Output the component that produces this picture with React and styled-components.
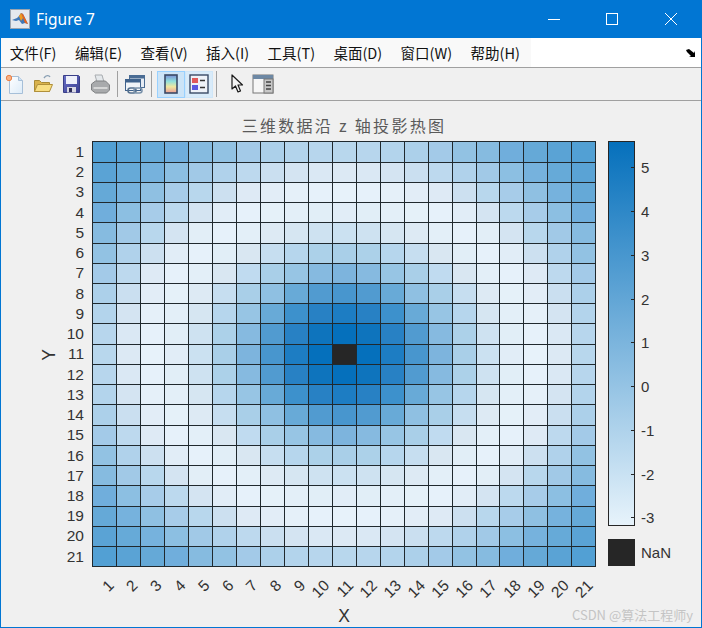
import React from 'react';
import styled, { createGlobalStyle } from 'styled-components';

const GlobalStyle = createGlobalStyle`
  html, body {
    margin: 0;
    padding: 0;
    background: #f0f0f0;
  }
`;

const MENUS = ['文件(F)', '编辑(E)', '查看(V)', '插入(I)', '工具(T)', '桌面(D)', '窗口(W)', '帮助(H)'];

// cell colour as a function of distance (in cells) from the centre of the grid
const RAMP = [
  [0, '#0570bc'], [1, '#0570bc'], [1.41, '#0e74bd'], [2, '#1d7dc3'], [2.24, '#2881c4'],
  [2.83, '#3d91cc'], [3, '#4896ce'], [3.16, '#519bd0'], [3.6, '#68aad7'], [4, '#7db4dd'],
  [4.24, '#8fc0e2'], [5, '#a9cfe8'], [5.66, '#c0dbf0'], [6.4, '#d9e7f2'], [7.2, '#e3eff8'],
  [8, '#e7f2fa'], [8.94, '#deeaf5'], [9.43, '#cce0f0'], [10, '#b8d7ed'], [10.77, '#a3cae8'],
  [11.18, '#92c2e3'], [11.66, '#86bbe0'], [12.2, '#70aedc'], [12.8, '#65a9d7'],
  [13.45, '#5aa3d5'], [14.15, '#52a0d4'],
];

const toRgb = (hex) => [1, 3, 5].map((i) => parseInt(hex.slice(i, i + 2), 16));

const colorAt = (r) => {
  for (let i = 1; i < RAMP.length; i++) {
    if (r <= RAMP[i][0]) {
      const [r0, c0] = RAMP[i - 1];
      const [r1, c1] = RAMP[i];
      const t = (r - r0) / (r1 - r0);
      const a = toRgb(c0);
      const b = toRgb(c1);
      return `rgb(${a.map((v, k) => Math.round(v + (b[k] - v) * t)).join(',')})`;
    }
  }
  return RAMP[RAMP.length - 1][1];
};

const N = 21;
const LEFT = 92.3;
const TOP = 141.3;
const CELL_W = 23.95;
const CELL_H = 20.24;
const xAt = (i) => Math.round(LEFT + i * CELL_W);
const yAt = (i) => Math.round(TOP + i * CELL_H);
const indexes = Array.from({ length: N }, (_, i) => i);
const TICKS = [5, 4, 3, 2, 1, 0, -1, -2, -3];

const Window = styled.div`
  width: 702px;
  height: 628px;
  box-sizing: border-box;
  border: 1px solid #0176d3;
  border-top: 0;
  display: flex;
  flex-direction: column;
  background: #f0f0f0;
  overflow: hidden;
`;

const TitleBar = styled.div`
  height: 38px;
  flex: none;
  background: #0176d3;
  display: flex;
  align-items: center;
  padding: 0 1px 0 9px;
  color: #fff;
`;

const TitleText = styled.span`
  font-family: 'Noto Sans', sans-serif;
  font-size: 15.5px;
  margin-left: 6px;
  flex: 1;
`;

const WindowButton = styled.div`
  width: 58.5px;
  height: 38px;
  display: flex;
  align-items: center;
  justify-content: center;
`;

const MenuBar = styled.div`
  height: 29px;
  flex: none;
  background: #fff;
  border-bottom: 1px solid #a0a0a0;
  display: flex;
  align-items: center;
  justify-content: space-between;
`;

const MenuList = styled.div`
  display: flex;
  align-items: center;
  height: 100%;
  background: #f9f9f9;
  width: 530px;
  padding-left: 0;
  margin-left: -0.5px;
`;

const MenuItem = styled.span`
  font-family: 'Noto Sans CJK SC', 'Liberation Sans', sans-serif;
  font-size: 14.5px;
  line-height: 27px;
  height: 28px;
  color: #111;
  padding: 0 9.2px;
  white-space: nowrap;
`;

const Overflow = styled.svg`
  margin-right: 4px;
`;

const ToolBar = styled.div`
  height: 32px;
  flex: none;
  border-bottom: 1px solid #a0a0a0;
  display: flex;
  align-items: center;
`;

const ToolButton = styled.div`
  width: ${(p) => p.$w || 28.5}px;
  height: 27px;
  box-sizing: border-box;
  display: flex;
  align-items: center;
  justify-content: center;
  background: ${(p) => (p.$on ? '#cce4f7' : p.$soft ? '#d9ebf9' : 'transparent')};
  border: 1px solid ${(p) => (p.$on ? '#99d1ff' : p.$soft ? '#cfe6f8' : 'transparent')};
`;

const Separator = styled.div`
  width: 1px;
  height: 26px;
  background: #a0a0a0;
  margin: 0 ${(p) => p.$right || 4}px 0 ${(p) => p.$left || 4}px;
`;

const Canvas = styled.div`
  flex: 1;
  min-height: 0;
  position: relative;
`;

const Chart = styled.svg`
  display: block;
`;

const Tick = styled.text`
  font-family: 'Liberation Sans', Arial, sans-serif;
  font-size: ${(p) => p.$size || 15.5}px;
  fill: #333;
`;

const PlotTitle = styled.text`
  font-family: 'Noto Sans CJK SC', 'Liberation Serif', serif;
  font-size: 16px;
  letter-spacing: 2.3px;
  fill: #5a5a5a;
`;

const Watermark = styled.span`
  position: absolute;
  right: 8px;
  bottom: 3px;
  font-family: 'Noto Sans CJK SC', 'Liberation Sans', sans-serif;
  font-size: 13px;
  color: #bdbdbd;
  opacity: 0.85;
`;

const MatlabLogo = () => (
  <svg width="20" height="20" viewBox="0 0 20 20">
    <rect x="0.5" y="0.5" width="19" height="19" fill="#e4e8ee" stroke="#9aa4b0" />
    <path d="M2 11l5-2 2-2 2-3 2 1 5 10-3-1-3 1-3-4-3 1z" fill="#3f78b8" />
    <path d="M11 4l2 1 5 10-3-1-2-5z" fill="#e8641c" />
    <path d="M9 7l2-3 2 5-2 3z" fill="#f29a1e" />
  </svg>
);

const NewIcon = () => (
  <svg width="22" height="22" viewBox="0 0 22 22">
    <defs>
      <linearGradient id="page-fill" x1="0" y1="0" x2="1" y2="1">
        <stop offset="0" stopColor="#ffffff" />
        <stop offset="1" stopColor="#dcebf8" />
      </linearGradient>
    </defs>
    <path d="M5.500 3.500h9l4 4v13h-13z" fill="url(#page-fill)" stroke="#a6bfd8" />
    <path d="M14.500 3.500v4h4" fill="#cfe2f3" stroke="#a6bfd8" />
    <circle cx="5" cy="5" r="2.700" fill="#f6b184" stroke="#ea7f46" />
  </svg>
);

const OpenIcon = () => (
  <svg width="22" height="22" viewBox="0 0 22 22">
    <path d="M11 5c2-3 5-3 6-1" fill="none" stroke="#8aa0b4" strokeWidth="1.4" />
    <path d="M1.500 7.500h5l2 2h8v9h-15z" fill="#d9b24c" stroke="#a98a35" />
    <path d="M1.500 18.500l3-7h15l-3 7z" fill="#f8de82" stroke="#b0903a" />
  </svg>
);

const SaveIcon = () => (
  <svg width="22" height="22" viewBox="0 0 22 22">
    <defs>
      <linearGradient id="disk-fill" x1="0" y1="0" x2="1" y2="1">
        <stop offset="0" stopColor="#6a70c8" />
        <stop offset="1" stopColor="#3a3f90" />
      </linearGradient>
    </defs>
    <path d="M2.500 2.500h15l1 1v16h-16z" fill="url(#disk-fill)" stroke="#3a3f88" />
    <rect x="5" y="3" width="11" height="8" fill="#eef0fa" />
    <rect x="6" y="14" width="9" height="5.500" fill="#d8d8e4" />
    <rect x="8" y="15" width="3" height="4" fill="#2e2e58" />
  </svg>
);

const PrintIcon = () => (
  <svg width="22" height="22" viewBox="0 0 22 22">
    <path d="M5 2h7l2 7H7z" fill="#e4e8eb" stroke="#a8acb0" />
    <path d="M1.500 11l4-3h10l4 4v5l-3 3h-11l-4-3z" fill="#a8aaac" stroke="#7e8082" />
    <path d="M3.500 15h14" stroke="#e4e4e4" strokeWidth="1.500" />
  </svg>
);

const LinkIcon = () => (
  <svg width="22" height="22" viewBox="0 0 22 22">
    <rect x="5.500" y="2.500" width="15" height="12" fill="#e6ecf4" stroke="#4a6c94" />
    <rect x="5.500" y="2.500" width="15" height="3" fill="#4a6c94" />
    <rect x="1.500" y="6.500" width="15" height="11" fill="#f0f4f8" stroke="#3f628c" />
    <rect x="1.500" y="6.500" width="15" height="3" fill="#3f628c" />
    <rect x="4" y="15" width="8" height="5" rx="2.500" fill="none" stroke="#54708e" strokeWidth="1.600" />
    <rect x="10" y="15" width="8" height="5" rx="2.500" fill="none" stroke="#7b93ab" strokeWidth="1.600" />
  </svg>
);

const ColorbarIcon = () => (
  <svg width="14" height="20" viewBox="0 0 14 20">
    <defs>
      <linearGradient id="toolbar-bar" x1="0" y1="0" x2="0" y2="1">
        <stop offset="0" stopColor="#7a8fd8" />
        <stop offset="0.35" stopColor="#8fe0dc" />
        <stop offset="0.65" stopColor="#f0e8a0" />
        <stop offset="1" stopColor="#e89a94" />
      </linearGradient>
    </defs>
    <rect x="1" y="1" width="12" height="18" fill="url(#toolbar-bar)" stroke="#3a4a66" strokeWidth="1.600" />
  </svg>
);

const LegendIcon = () => (
  <svg width="20" height="20" viewBox="0 0 20 20">
    <rect x="1" y="1" width="18" height="18" fill="#eef2f8" stroke="#3a4a66" strokeWidth="1.400" />
    <rect x="3" y="4" width="6" height="5" fill="#e05a5a" />
    <rect x="3" y="11" width="6" height="5" fill="#5a5ae0" />
    <path d="M11 6.500h5M11 13.500h5" stroke="#333" strokeWidth="1.400" />
  </svg>
);

const PointerIcon = () => (
  <svg width="16" height="20" viewBox="0 0 16 20">
    <path d="M3 1v14l3.500-3 2.500 6 2.500-1-2.500-6h4.500z" fill="#f4f4f4" stroke="#1a1a1a" strokeWidth="1.200" strokeLinejoin="round" />
  </svg>
);

const PanelIcon = () => (
  <svg width="22" height="20" viewBox="0 0 22 20">
    <rect x="1" y="1" width="20" height="18" fill="#f6f6f6" stroke="#777" />
    <rect x="1" y="1" width="20" height="4" fill="#6d88a4" />
    <rect x="12" y="5" width="9" height="14" fill="#c8c8c8" stroke="#777" />
    <path d="M14 8h5M14 11.500h5M14 15h5" stroke="#444" strokeWidth="1.400" />
  </svg>
);

const HeatmapChart = () => {
  const right = xAt(N);
  const bottom = yAt(N);
  return (
    <Chart width="700" height="526" viewBox="1 101 700 526">
      <defs>
        <linearGradient id="bar-fill" x1="0" y1="0" x2="0" y2="1">
          <stop offset="0" stopColor="#0570bc" />
          <stop offset="1" stopColor="#e7f3fb" />
        </linearGradient>
      </defs>

      <PlotTitle x="344" y="132" textAnchor="middle">三维数据沿 z 轴投影热图</PlotTitle>

      {indexes.map((row) =>
        indexes.map((col) => (
          <rect
            key={`${row}-${col}`}
            x={xAt(col)}
            y={yAt(row)}
            width={xAt(col + 1) - xAt(col)}
            height={yAt(row + 1) - yAt(row)}
            fill={row === 10 && col === 10 ? '#262626' : colorAt(Math.hypot(row - 10, col - 10))}
          />
        ))
      )}
      {indexes.concat(N).map((i) => (
        <React.Fragment key={i}>
          <line x1={xAt(i) + 0.5} x2={xAt(i) + 0.5} y1={yAt(0)} y2={bottom + 1} stroke="#20292e" />
          <line y1={yAt(i) + 0.5} y2={yAt(i) + 0.5} x1={xAt(0)} x2={right + 1} stroke="#20292e" />
        </React.Fragment>
      ))}

      {indexes.map((i) => (
        <Tick key={i} x="84" y={TOP + (i + 0.5) * CELL_H + 5.5} textAnchor="end">{i + 1}</Tick>
      ))}
      {indexes.map((i) => {
        const x = LEFT + (i + 0.5) * CELL_W + 10.5;
        return (
          <Tick key={i} x={x} y="586.5" textAnchor="end" transform={`rotate(-45 ${x} 586.5)`}>{i + 1}</Tick>
        );
      })}
      <Tick $size={17.5} x="344" y="622" textAnchor="middle">X</Tick>
      <Tick $size={17.5} x="55" y="355" textAnchor="middle" transform="rotate(-90 55 355)">Y</Tick>

      <rect x="608.5" y="141.5" width="26" height="384" fill="url(#bar-fill)" stroke="#262626" />
      {TICKS.map((v) => {
        const y = Math.round(167.3 + (5 - v) * 43.75) + 0.5;
        return (
          <React.Fragment key={v}>
            <line x1="631" x2="634" y1={y} y2={y} stroke="#262626" />
            <Tick $size={15} x="641" y={y + 5.5}>{v}</Tick>
          </React.Fragment>
        );
      })}
      <rect x="608" y="539" width="27" height="27" fill="#262626" />
      <Tick $size={15} x="641" y="558">NaN</Tick>
    </Chart>
  );
};

const App = () => (
  <>
    <GlobalStyle />
    <Window>
      <TitleBar>
        <MatlabLogo />
        <TitleText>Figure 7</TitleText>
        <WindowButton>
          <svg width="14" height="14" viewBox="0 0 14 14"><path d="M1 7.500h12" stroke="#fff" /></svg>
        </WindowButton>
        <WindowButton>
          <svg width="14" height="14" viewBox="0 0 14 14"><rect x="1.500" y="1.500" width="11" height="11" fill="none" stroke="#fff" /></svg>
        </WindowButton>
        <WindowButton>
          <svg width="14" height="14" viewBox="0 0 14 14"><path d="M1 1l12 12M13 1L1 13" stroke="#fff" /></svg>
        </WindowButton>
      </TitleBar>
      <MenuBar>
        <MenuList>
          {MENUS.map((m) => <MenuItem key={m}>{m}</MenuItem>)}
        </MenuList>
        <Overflow width="12" height="10" viewBox="0 0 12 10">
          <path d="M1 2l3-1 5 4 1-2v6H4l2-1-4-4z" fill="#000" />
        </Overflow>
      </MenuBar>
      <ToolBar>
        <ToolButton><NewIcon /></ToolButton>
        <ToolButton><OpenIcon /></ToolButton>
        <ToolButton><SaveIcon /></ToolButton>
        <ToolButton><PrintIcon /></ToolButton>
        <Separator $left={2} $right={3} />
        <ToolButton><LinkIcon /></ToolButton>
        <Separator $left={1} $right={5} />
        <ToolButton $on $w={28}><ColorbarIcon /></ToolButton>
        <ToolButton $soft $w={28}><LegendIcon /></ToolButton>
        <Separator $left={3} $right={6} />
        <ToolButton $w={28}><PointerIcon /></ToolButton>
        <ToolButton $w={24}><PanelIcon /></ToolButton>
      </ToolBar>
      <Canvas>
        <HeatmapChart />
        <Watermark>CSDN @算法工程师y</Watermark>
      </Canvas>
    </Window>
  </>
);

export default App;
